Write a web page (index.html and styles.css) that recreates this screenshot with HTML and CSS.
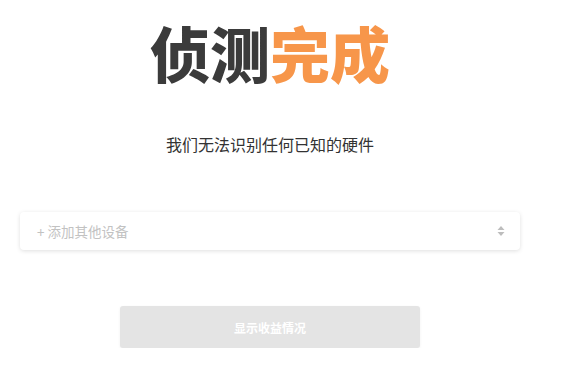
FILE: index.html
```html
<!DOCTYPE html>
<html lang="zh">
<head>
<meta charset="utf-8">
<link rel="stylesheet" href="styles.css">
</head>
<body>
<main class="page">
  <h1 class="title"><span class="dark">侦测</span><span class="accent">完成</span></h1>
  <p class="subtitle">我们无法识别任何已知的硬件</p>
  <div class="select">
    <span class="placeholder">+ 添加其他设备</span>
    <svg class="arrows" width="8" height="12" viewBox="0 0 8 12"><path d="M4 1 L7.5 5 H0.5 Z M4 11 L7.5 7 H0.5 Z" fill="#bdbdbd"/></svg>
  </div>
  <div class="actions">
    <button class="btn">显示收益情况</button>
  </div>
</main>
</body>
</html>
```
FILE: styles.css
```css
html, body {
  margin: 0;
  padding: 0;
  background: #fff;
}
body {
  font-family: "Noto Sans CJK SC", "Noto Sans", sans-serif;
}
.page {
  width: 500px;
  padding: 16px 0 0 20px;
  display: flex;
  flex-direction: column;
  align-items: stretch;
}
.title {
  margin: 0;
  text-align: center;
  font-size: 60px;
  line-height: 72px;
  font-weight: 900;
  letter-spacing: 0;
}
.dark { color: #3b3b3b; }
.accent { color: #f7964a; }
.subtitle {
  margin: 44px 0 0;
  text-align: center;
  font-size: 16px;
  line-height: 24px;
  color: #333;
}
.select {
  margin-top: 56px;
  height: 38px;
  border-radius: 4px;
  box-shadow: 0 1px 4px rgba(0,0,0,0.13);
  display: flex;
  align-items: center;
  justify-content: space-between;
  padding: 0 15px 0 17px;
}
.placeholder {
  font-size: 13.5px;
  color: #c2c2c2;
}
.arrows { display: block; }
.actions {
  margin-top: 56px;
  display: flex;
  justify-content: center;
}
.btn {
  width: 300px;
  height: 42px;
  border: 0;
  border-radius: 3px;
  background: #e4e4e4;
  box-shadow: 0 1px 3px rgba(0,0,0,0.06);
  color: #fff;
  font-family: "Noto Sans CJK SC", sans-serif;
  font-size: 12px;
  font-weight: 700;
}
```
